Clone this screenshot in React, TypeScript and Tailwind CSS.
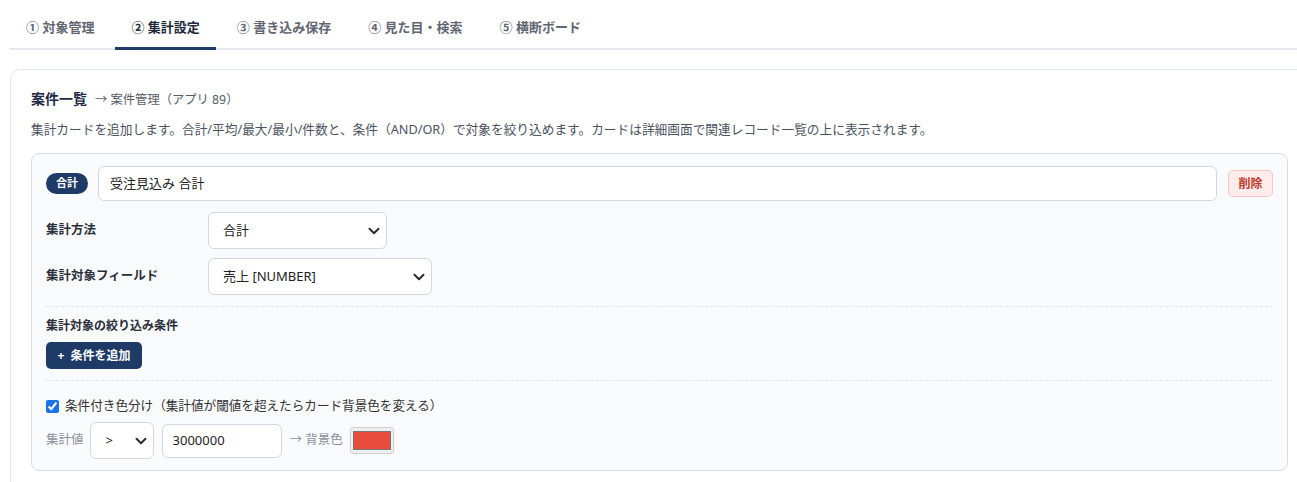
import React from "react";

const TABS = ["① 対象管理", "② 集計設定", "③ 書き込み保存", "④ 見た目・検索", "⑤ 横断ボード"];

function Chevron() {
  return (
    <svg width="12" height="8" viewBox="0 0 12 8" className="shrink-0">
      <path d="M1.5 1.8 L6 6.2 L10.5 1.8" fill="none" stroke="#2b2b2b" strokeWidth="2" strokeLinecap="round" strokeLinejoin="round" />
    </svg>
  );
}

function FakeSelect({ value, width }: { value: string; width: string }) {
  return (
    <div className={`${width} h-[37px] flex items-center justify-between pl-[14px] pr-[6px] bg-white border border-[#cfd8e3] rounded-[6px] text-[13px] text-[#222]`}>
      <span>{value}</span>
      <Chevron />
    </div>
  );
}

export default function App() {
  return (
    <div className="w-[1297px] h-[482px] overflow-hidden bg-white font-['Noto_Sans','Noto_Sans_CJK_JP',sans-serif]">
      <div className="w-[1319px] px-[10px] pt-[9px]">
        {/* tabs */}
        <div className="flex gap-[5px] border-b-2 border-[#e3e8ef]">
          {TABS.map((t, i) => (
            <div
              key={t}
              className={`h-[41px] -mb-[2px] px-[16px] flex items-center text-[13px] font-bold border-b-[3px] ${
                i === 1 ? "border-[#1e3a66] text-[#1e293b]" : "border-transparent text-[#5f6672]"
              }`}
            >
              {t}
            </div>
          ))}
        </div>

        {/* outer card */}
        <div className="mt-[19px] border border-[#e3e7ee] rounded-[10px] px-[20px] pt-[19px] pb-[20px]">
          <div className="flex items-baseline h-[20px] leading-[20px]">
            <span className="text-[14px] font-bold text-[#1e2a44]">案件一覧</span>
            <span className="ml-[8px] text-[12.3px] text-[#555b66]">→ 案件管理（アプリ 89）</span>
          </div>
          <p className="mt-[10px] text-[12.7px] leading-[20px] text-[#4b5260]">
            集計カードを追加します。合計/平均/最大/最小/件数と、条件（AND/OR）で対象を絞り込めます。カードは詳細画面で関連レコード一覧の上に表示されます。
          </p>

          {/* inner card */}
          <div className="mt-[14px] border border-[#d8dee8] bg-[#f8fafc] rounded-[8px] px-[14px] pt-[12px] pb-[11px]">
            <div className="flex items-center">
              <span className="w-[42px] h-[21px] rounded-full bg-[#1e3a66] text-white text-[11px] font-bold flex items-center justify-center">
                合計
              </span>
              <div className="ml-[10px] flex-1 h-[35px] bg-white border border-[#cfd8e3] rounded-[6px] flex items-center px-[11px] text-[13px] text-[#222]">
                受注見込み 合計
              </div>
              <button className="ml-[11px] w-[45px] h-[27px] rounded-[5px] bg-[#fdeceb] border border-[#f5c6c4] text-[#c0392b] text-[12px] font-bold">
                削除
              </button>
            </div>

            <div className="mt-[11px] flex items-center">
              <span className="w-[162px] text-[12.5px] font-bold text-[#2a2f3a]">集計方法</span>
              <FakeSelect value="合計" width="w-[179px]" />
            </div>
            <div className="mt-[9px] flex items-center">
              <span className="w-[162px] text-[12.5px] font-bold text-[#2a2f3a]">集計対象フィールド</span>
              <FakeSelect value="売上 [NUMBER]" width="w-[224px]" />
            </div>

            <div className="mt-[11px] border-t border-dashed border-[#dde3ea] pt-[9px]">
              <div className="text-[12px] leading-[20px] font-bold text-[#2a2f3a]">集計対象の絞り込み条件</div>
              <button className="mt-[6px] w-[96px] h-[27px] rounded-[5px] bg-[#1e3a66] text-white text-[12px] font-bold">
                +&nbsp;&nbsp;条件を追加
              </button>
            </div>

            <div className="mt-[11px] border-t border-dashed border-[#dde3ea] pt-[15px]">
              <label className="flex items-center h-[20px] text-[12.6px] text-[#333]">
                <input type="checkbox" defaultChecked className="w-[13px] h-[13px] m-0 accent-[#1a73e8]" />
                <span className="ml-[6px]">条件付き色分け（集計値が閾値を超えたらカード背景色を変える）</span>
              </label>
              <div className="mt-[6px] flex items-center">
                <span className="text-[12.5px] text-[#8a919c]">集計値</span>
                <div className="ml-[6px] w-[64px] h-[37px] flex items-center justify-between pl-[15px] pr-[6px] bg-white border border-[#cfd8e3] rounded-[6px] text-[13px] text-[#222]">
                  <span>&gt;</span>
                  <Chevron />
                </div>
                <div className="ml-[8px] w-[120px] h-[34px] flex items-center px-[10px] bg-white border border-[#cfd8e3] rounded-[6px] text-[13px] text-[#222]">
                  3000000
                </div>
                <span className="ml-[8px] text-[12.5px] text-[#8a919c]">→ 背景色</span>
                <div className="ml-[7px] w-[44px] h-[27px] rounded-[3px] bg-[#efefef] border border-[#cfcfcf] flex items-center justify-center">
                  <div className="w-[38px] h-[19px] bg-[#e74c3c] border border-[#777]" />
                </div>
              </div>
            </div>
          </div>
        </div>
      </div>
    </div>
  );
}
